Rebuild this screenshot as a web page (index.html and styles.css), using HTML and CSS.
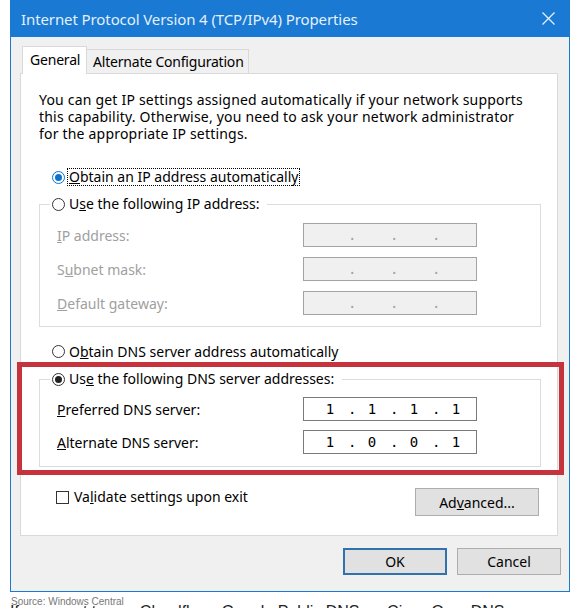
FILE: index.html
```html
<!DOCTYPE html>
<html lang="en">
<head>
  <meta charset="UTF-8">
  <meta name="viewport" content="width=device-width, initial-scale=1.0">
  <title>Internet Protocol Version 4 (TCP/IPv4) Properties</title>
  <link rel="stylesheet" href="styles.css">
</head>
<body>
  <div class="window">
    <div class="titlebar">
      <span class="title">Internet Protocol Version 4 (TCP/IPv4) Properties</span>
      <svg class="close" width="13" height="13" viewBox="0 0 13 13">
        <path d="M0.5 0.5 L12.5 12.5 M12.5 0.5 L0.5 12.5" stroke="#e4f0fb" stroke-width="1.3" fill="none"/>
      </svg>
    </div>

    <div class="tabs">
      <div class="tab tab-general active">General</div>
      <div class="tab tab-alt">Alternate Configuration</div>
    </div>

    <div class="panel">
      <p class="intro">You can get IP settings assigned automatically if your network supports this capability. Otherwise, you need to ask your network administrator for the appropriate IP settings.</p>

      <div class="option first">
        <span class="radio checked focus-blue"></span>
        <span class="focus-box"><u>O</u>btain an IP address automatically</span>
      </div>

      <fieldset class="group ip-group">
        <legend><span class="radio"></span>U<u>s</u>e the following IP address:</legend>
        <div class="field first-field disabled">
          <span><u>I</u>P address:</span>
          <span class="ipbox"><span class="seg"></span><span class="dot">.</span><span class="seg"></span><span class="dot">.</span><span class="seg"></span><span class="dot">.</span><span class="seg"></span></span>
        </div>
        <div class="field disabled">
          <span>S<u>u</u>bnet mask:</span>
          <span class="ipbox"><span class="seg"></span><span class="dot">.</span><span class="seg"></span><span class="dot">.</span><span class="seg"></span><span class="dot">.</span><span class="seg"></span></span>
        </div>
        <div class="field disabled">
          <span><u>D</u>efault gateway:</span>
          <span class="ipbox"><span class="seg"></span><span class="dot">.</span><span class="seg"></span><span class="dot">.</span><span class="seg"></span><span class="dot">.</span><span class="seg"></span></span>
        </div>
      </fieldset>

      <div class="option dns-auto">
        <span class="radio"></span>
        <span>O<u>b</u>tain DNS server address automatically</span>
      </div>

      <div class="dns">
        <fieldset class="group">
          <legend><span class="radio checked"></span>Us<u>e</u> the following DNS server addresses:</legend>
          <div class="field first-field">
            <span><u>P</u>referred DNS server:</span>
            <span class="ipbox"><span class="seg">1</span><span class="dot">.</span><span class="seg">1</span><span class="dot">.</span><span class="seg">1</span><span class="dot">.</span><span class="seg">1</span></span>
          </div>
          <div class="field">
            <span><u>A</u>lternate DNS server:</span>
            <span class="ipbox"><span class="seg">1</span><span class="dot">.</span><span class="seg">0</span><span class="dot">.</span><span class="seg">0</span><span class="dot">.</span><span class="seg">1</span></span>
          </div>
        </fieldset>
      </div>

      <div class="bottom-row">
        <div class="check-label">
          <span class="checkbox"></span>
          <span>Va<u>l</u>idate settings upon exit</span>
        </div>
        <div class="button advanced">Ad<u>v</u>anced...</div>
      </div>
    </div>

    <div class="buttons">
      <div class="button default">OK</div>
      <div class="button">Cancel</div>
    </div>
  </div>

  <p class="source">Source: Windows Central</p>
  <p class="article">If you want to use Cloudflare, Google Public DNS, or Cisco OpenDNS, you can use the following settings:</p>
</body>
</html>
```

FILE: styles.css
```css
body {
  margin: 0;
  background-color: #ffffff;
  font-family: 'Noto Sans', 'Open Sans', sans-serif;
  overflow: hidden;
}

.window {
  margin-left: 10px;
  width: 560px;
  box-sizing: border-box;
  border: 1px solid #1979d3;
  border-top: none;
  background-color: #f0f0f0;
  font-size: 14px;
  color: #000;
}

.titlebar {
  display: flex;
  align-items: center;
  justify-content: space-between;
  height: 37px;
  padding: 0 14px 0 10px;
  background-color: #1979d3;
  color: #e4f0fb;
  font-size: 15px;
  letter-spacing: -0.1px;
}

/* tabs */
.tabs {
  display: flex;
  align-items: flex-end;
  margin: 9px 0 -1px 11px;
}

.tab {
  box-sizing: border-box;
  height: 25px;
  border: 1px solid #d9d9d9;
  background-color: #f0f0f0;
  line-height: 23px;
  padding-left: 6px;
  letter-spacing: -0.2px;
  white-space: nowrap;
}

.tab + .tab {
  border-left: none;
}

.tab.active {
  position: relative;
  z-index: 1;
  height: 28px;
  border-bottom: none;
  background-color: #ffffff;
  line-height: 26px;
}

.tab-general {
  width: 65px;
  padding-left: 7px;
}

.tab-alt {
  width: 162px;
}

/* tab page */
.panel {
  margin: 0 11px 0 9px;
  padding: 17px 16px 19px 18px;
  background-color: #ffffff;
  border: 1px solid #d9d9d9;
}

.intro {
  margin: 0;
  max-width: 490px;
  line-height: 17px;
  letter-spacing: 0.2px;
}

.option {
  display: flex;
  align-items: center;
  height: 20px;
  padding-left: 13px;
  gap: 4px;
}

.option.first {
  margin-top: 25px;
}

.option.dns-auto {
  margin-top: 14px;
}

.focus-box {
  border: 1px dotted #000;
  line-height: 16px;
  padding: 0 1px;
  margin-left: -2px;
}

.radio {
  display: inline-block;
  box-sizing: border-box;
  width: 13px;
  height: 13px;
  border: 1px solid #333;
  border-radius: 50%;
  background-color: #fff;
  position: relative;
  vertical-align: -2px;
}

.radio.checked::after {
  content: "";
  position: absolute;
  left: 2px;
  top: 2px;
  width: 7px;
  height: 7px;
  border-radius: 50%;
  background-color: #222;
}

.radio.focus-blue {
  border-color: #0a74d0;
}

.radio.focus-blue::after {
  background-color: #0a74d0;
}

.group {
  margin: 0;
  padding: 0 0 12px;
  border: 1px solid #dcdcdc;
}

.ip-group {
  margin-top: 7px;
  padding-bottom: 11px;
}

.group legend {
  margin-left: 10px;
  padding: 0 8px 0 2px;
  line-height: 20px;
}

.group legend .radio {
  margin-right: 4px;
}

.field {
  display: flex;
  align-items: center;
  justify-content: space-between;
  height: 24px;
  margin-top: 9px;
  padding: 0 63px 0 17px;
}

.ip-group .field {
  margin-top: 10px;
}

.ip-group .field.first-field {
  margin-top: 9px;
}

.dns .field.first-field {
  margin-top: 8px;
}

.field.disabled {
  color: #a0a0a0;
}

.ipbox {
  box-sizing: border-box;
  display: flex;
  width: 174px;
  height: 24px;
  padding-left: 8px;
  border: 1px solid #7a7a7a;
  background-color: #fff;
  font-family: 'DejaVu Sans Mono', 'Liberation Mono', monospace;
  font-size: 14px;
  line-height: 22px;
  color: #000;
}

.field.disabled .ipbox {
  border-color: #a3a3a3;
  background-color: #f0f0f0;
  color: #a0a0a0;
}

.seg {
  width: 36px;
  text-align: center;
}

.dot {
  width: 6px;
  text-align: center;
}

.dns {
  position: relative;
  margin-top: 8px;
}

/* red annotation frame over the DNS section */
.dns::after {
  content: "";
  position: absolute;
  top: -7px;
  left: -22px;
  right: -23px;
  bottom: -8px;
  border: 5px solid #c5333d;
  pointer-events: none;
}

.bottom-row {
  display: flex;
  justify-content: space-between;
  align-items: flex-start;
  margin-top: 21px;
}

.check-label {
  display: flex;
  align-items: center;
  gap: 5px;
  margin-left: 17px;
  line-height: 18px;
}

.checkbox {
  box-sizing: border-box;
  width: 13px;
  height: 13px;
  border: 1px solid #333;
  background-color: #fff;
}

.button {
  box-sizing: border-box;
  display: flex;
  align-items: center;
  justify-content: center;
  width: 104px;
  height: 27px;
  border: 1px solid #adadad;
  background-color: #e1e1e1;
}

.button.advanced {
  width: 124px;
  height: 28px;
  margin-right: 2px;
}

.button.default {
  border: 2px solid #2f72ae;
}

.buttons {
  display: flex;
  justify-content: flex-end;
  gap: 10px;
  padding: 12px 8px 16px 0;
}

.source {
  margin: 5px 0 0 11px;
  font-family: 'Liberation Sans', Arial, sans-serif;
  font-size: 10px;
  line-height: 9px;
  color: #777;
}

.article {
  margin: -3px 0 0 10px;
  width: 570px;
  overflow: hidden;
  font-family: 'Liberation Sans', Arial, sans-serif;
  font-size: 16px;
  line-height: 18px;
  color: #222;
  white-space: nowrap;
}
```
